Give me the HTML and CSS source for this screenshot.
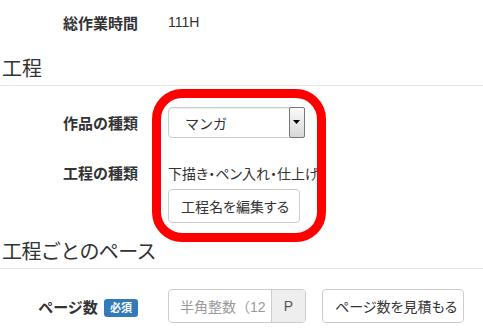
FILE: index.html
```html
<!DOCTYPE html>
<html lang="ja">
<head>
<meta charset="utf-8">
<link rel="stylesheet" href="styles.css">
</head>
<body>
<div class="page">
  <div class="form-row total">
    <div class="lbl">総作業時間</div>
    <div class="ctl">111H</div>
  </div>

  <h2 class="section first">工程</h2>

  <div class="group">
    <div class="form-row kind">
      <div class="lbl">作品の種類</div>
      <div class="ctl">
        <div class="select"><span class="sel-text">マンガ</span><span class="arrow"><svg width="8" height="5" viewBox="0 0 8 5"><path d="M0 0H7L3.5 4Z" fill="#000"/></svg></span></div>
      </div>
    </div>
    <div class="form-row steps">
      <div class="lbl">工程の種類</div>
      <div class="ctl steps-text">下描き・ペン入れ・仕上げ</div>
    </div>
    <div class="form-row edit">
      <div class="lbl"></div>
      <div class="ctl"><button class="btn">工程名を編集する</button></div>
    </div>
    <div class="highlight"></div>
  </div>

  <h2 class="section second">工程ごとのペース</h2>

  <div class="form-row pages">
    <div class="lbl">ページ数 <span class="badge">必須</span></div>
    <div class="ctl pages-ctl">
      <div class="input-group">
        <span class="input">半角整数（12</span>
        <span class="addon">P</span>
      </div>
      <button class="btn">ページ数を見積もる</button>
    </div>
  </div>
</div>
</body>
</html>
```

FILE: styles.css
```css
html, body {
  margin: 0;
  padding: 0;
  background: #fff;
}
body {
  font-family: "Liberation Sans", "Noto Sans CJK JP", sans-serif;
  font-size: 14px;
  color: #333;
  overflow: hidden;
}
.page {
  width: 483px;
  height: 336px;
  position: relative;
}
.form-row {
  display: grid;
  grid-template-columns: 138px 1fr;
  column-gap: 30px;
  align-items: center;
}
.lbl {
  text-align: right;
  font-weight: bold;
  font-size: 15px;
  white-space: nowrap;
}
.ctl {
  white-space: nowrap;
}
.total {
  height: 44px;
}
.section {
  margin: 0;
  font-size: 20px;
  font-weight: normal;
  line-height: 30px;
  padding: 0 2px 1px;
  border-bottom: 1px solid #e5e5e5;
  color: #333;
}
.section.first {
  padding-top: 10px;
}
.section.second {
  margin-top: 14px;
  letter-spacing: -0.6px;
}
.group {
  position: relative;
  padding-top: 21px;
}
.kind {
  height: 31px;
}
.select {
  width: 137px;
  height: 31px;
  box-sizing: border-box;
  border: 1px solid #ccc;
  border-radius: 4px;
  display: flex;
  align-items: center;
  justify-content: space-between;
  padding: 0 0 0 16px;
  box-shadow: inset 0 1px 1px rgba(0,0,0,.075);
}
.arrow {
  width: 16px;
  height: 31px;
  box-sizing: border-box;
  border: 1px solid #777;
  border-radius: 2px;
  background: linear-gradient(#fafafa, #d8d8d8);
  display: flex;
  align-items: center;
  justify-content: center;
  margin-right: -1px;
}
.steps {
  height: 20px;
  margin-top: 24px;
}
.steps-text {
  font-size: 14px;
  font-feature-settings: "palt";
}
.edit {
  margin-top: 7px;
  height: 34px;
}
.btn {
  font-family: inherit;
  font-size: 14px;
  font-feature-settings: "palt";
  color: #333;
  background: #fff;
  border: 1px solid #ccc;
  border-radius: 4px;
  height: 34px;
  padding: 0 12px;
  box-sizing: border-box;
}
.edit .btn {
  width: 132px;
}
.highlight {
  position: absolute;
  left: 152px;
  top: 3px;
  width: 174px;
  height: 153px;
  box-sizing: border-box;
  border: 9px solid #f00;
  border-radius: 30px;
}
.pages {
  margin-top: 20px;
  height: 34px;
}
.badge {
  display: inline-block;
  background: #337ab7;
  color: #fff;
  font-size: 11px;
  line-height: 18px;
  padding: 0 6px;
  border-radius: 3px;
  vertical-align: 1px;
  margin-left: 2px;
}
.pages-ctl {
  display: flex;
  align-items: center;
  gap: 16px;
}
.input-group {
  display: flex;
  height: 34px;
  width: 138px;
  box-sizing: border-box;
  border: 1px solid #ccc;
  border-radius: 4px;
  overflow: hidden;
}
.input {
  flex: 1;
  color: #999;
  padding-left: 11px;
  display: flex;
  align-items: center;
  overflow: hidden;
  white-space: nowrap;
}
.addon {
  width: 33px;
  flex: none;
  background: #eee;
  border-left: 1px solid #ccc;
  display: flex;
  align-items: center;
  justify-content: center;
  color: #555;
}
.pages .btn {
  width: 142px;
}
```
